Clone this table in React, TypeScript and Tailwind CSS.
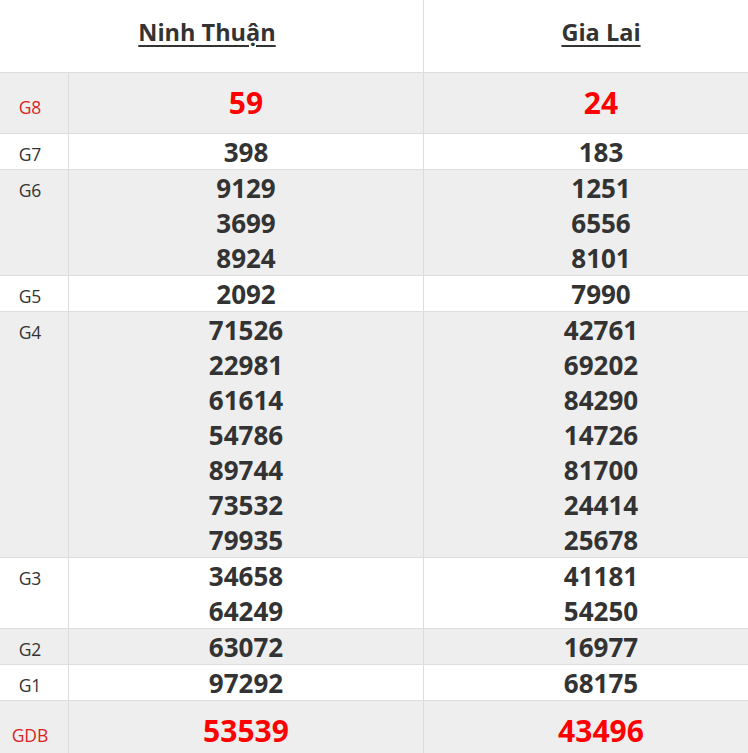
import React from "react";

type Row = { label: string; a: string[]; b: string[]; special?: boolean };

const rows: Row[] = [
  { label: "G8", a: ["59"], b: ["24"], special: true },
  { label: "G7", a: ["398"], b: ["183"] },
  { label: "G6", a: ["9129", "3699", "8924"], b: ["1251", "6556", "8101"] },
  { label: "G5", a: ["2092"], b: ["7990"] },
  {
    label: "G4",
    a: ["71526", "22981", "61614", "54786", "89744", "73532", "79935"],
    b: ["42761", "69202", "84290", "14726", "81700", "24414", "25678"],
  },
  { label: "G3", a: ["34658", "64249"], b: ["41181", "54250"] },
  { label: "G2", a: ["63072"], b: ["16977"] },
  { label: "G1", a: ["97292"], b: ["68175"] },
  { label: "GDB", a: ["53539"], b: ["43496"], special: true },
];

function NumberCell({ values, special, last }: { values: string[]; special?: boolean; last?: boolean }) {
  return (
    <div className={`flex flex-col items-center ${last ? "" : "border-r border-[#dddddd]"}`}>
      {values.map((v, i) =>
        special ? (
          <div key={i} className="text-[30px] leading-[60px] font-bold text-[#ff0000]">
            {v}
          </div>
        ) : (
          <div key={i} className="text-[26px] leading-[35px] font-bold text-[#333333] translate-y-[1px]">
            {v}
          </div>
        )
      )}
    </div>
  );
}

export default function App() {
  return (
    <div className="w-[748px] h-[753px] overflow-hidden bg-white" style={{ fontFamily: '"Open Sans", "Liberation Sans", sans-serif' }}>
      <div className="w-[778px]">
        <div className="grid grid-cols-[424px_354px] border-b border-[#dddddd]">
          <div className="border-r border-[#dddddd] h-[72px] pt-[16px] pr-[9px] text-center">
            <span className="text-[23.5px] leading-[32px] font-bold text-[#333333] underline decoration-2 underline-offset-[4px]">
              Ninh Thuận
            </span>
          </div>
          <div className="h-[72px] pt-[16px] text-center">
            <span className="text-[23.5px] leading-[32px] font-bold text-[#333333] underline decoration-2 underline-offset-[4px]">
              Gia Lai
            </span>
          </div>
        </div>
        {rows.map((r, idx) => (
          <div
            key={r.label}
            className={`grid grid-cols-[69px_355px_354px] border-b border-[#dddddd] ${idx % 2 === 0 ? "bg-[#eeeeee]" : "bg-white"}`}
          >
            <div
              className={`border-r border-[#dddddd] text-center pr-[8px] font-normal ${
                r.special ? "text-[30px] leading-[60px] text-[#dc1f1f]" : "text-[26px] leading-[35px] text-[#333333]"
              }`}
            >
              <span className="text-[17.5px] leading-none">{r.label}</span>
            </div>
            <NumberCell values={r.a} special={r.special} />
            <NumberCell values={r.b} special={r.special} last />
          </div>
        ))}
      </div>
    </div>
  );
}
